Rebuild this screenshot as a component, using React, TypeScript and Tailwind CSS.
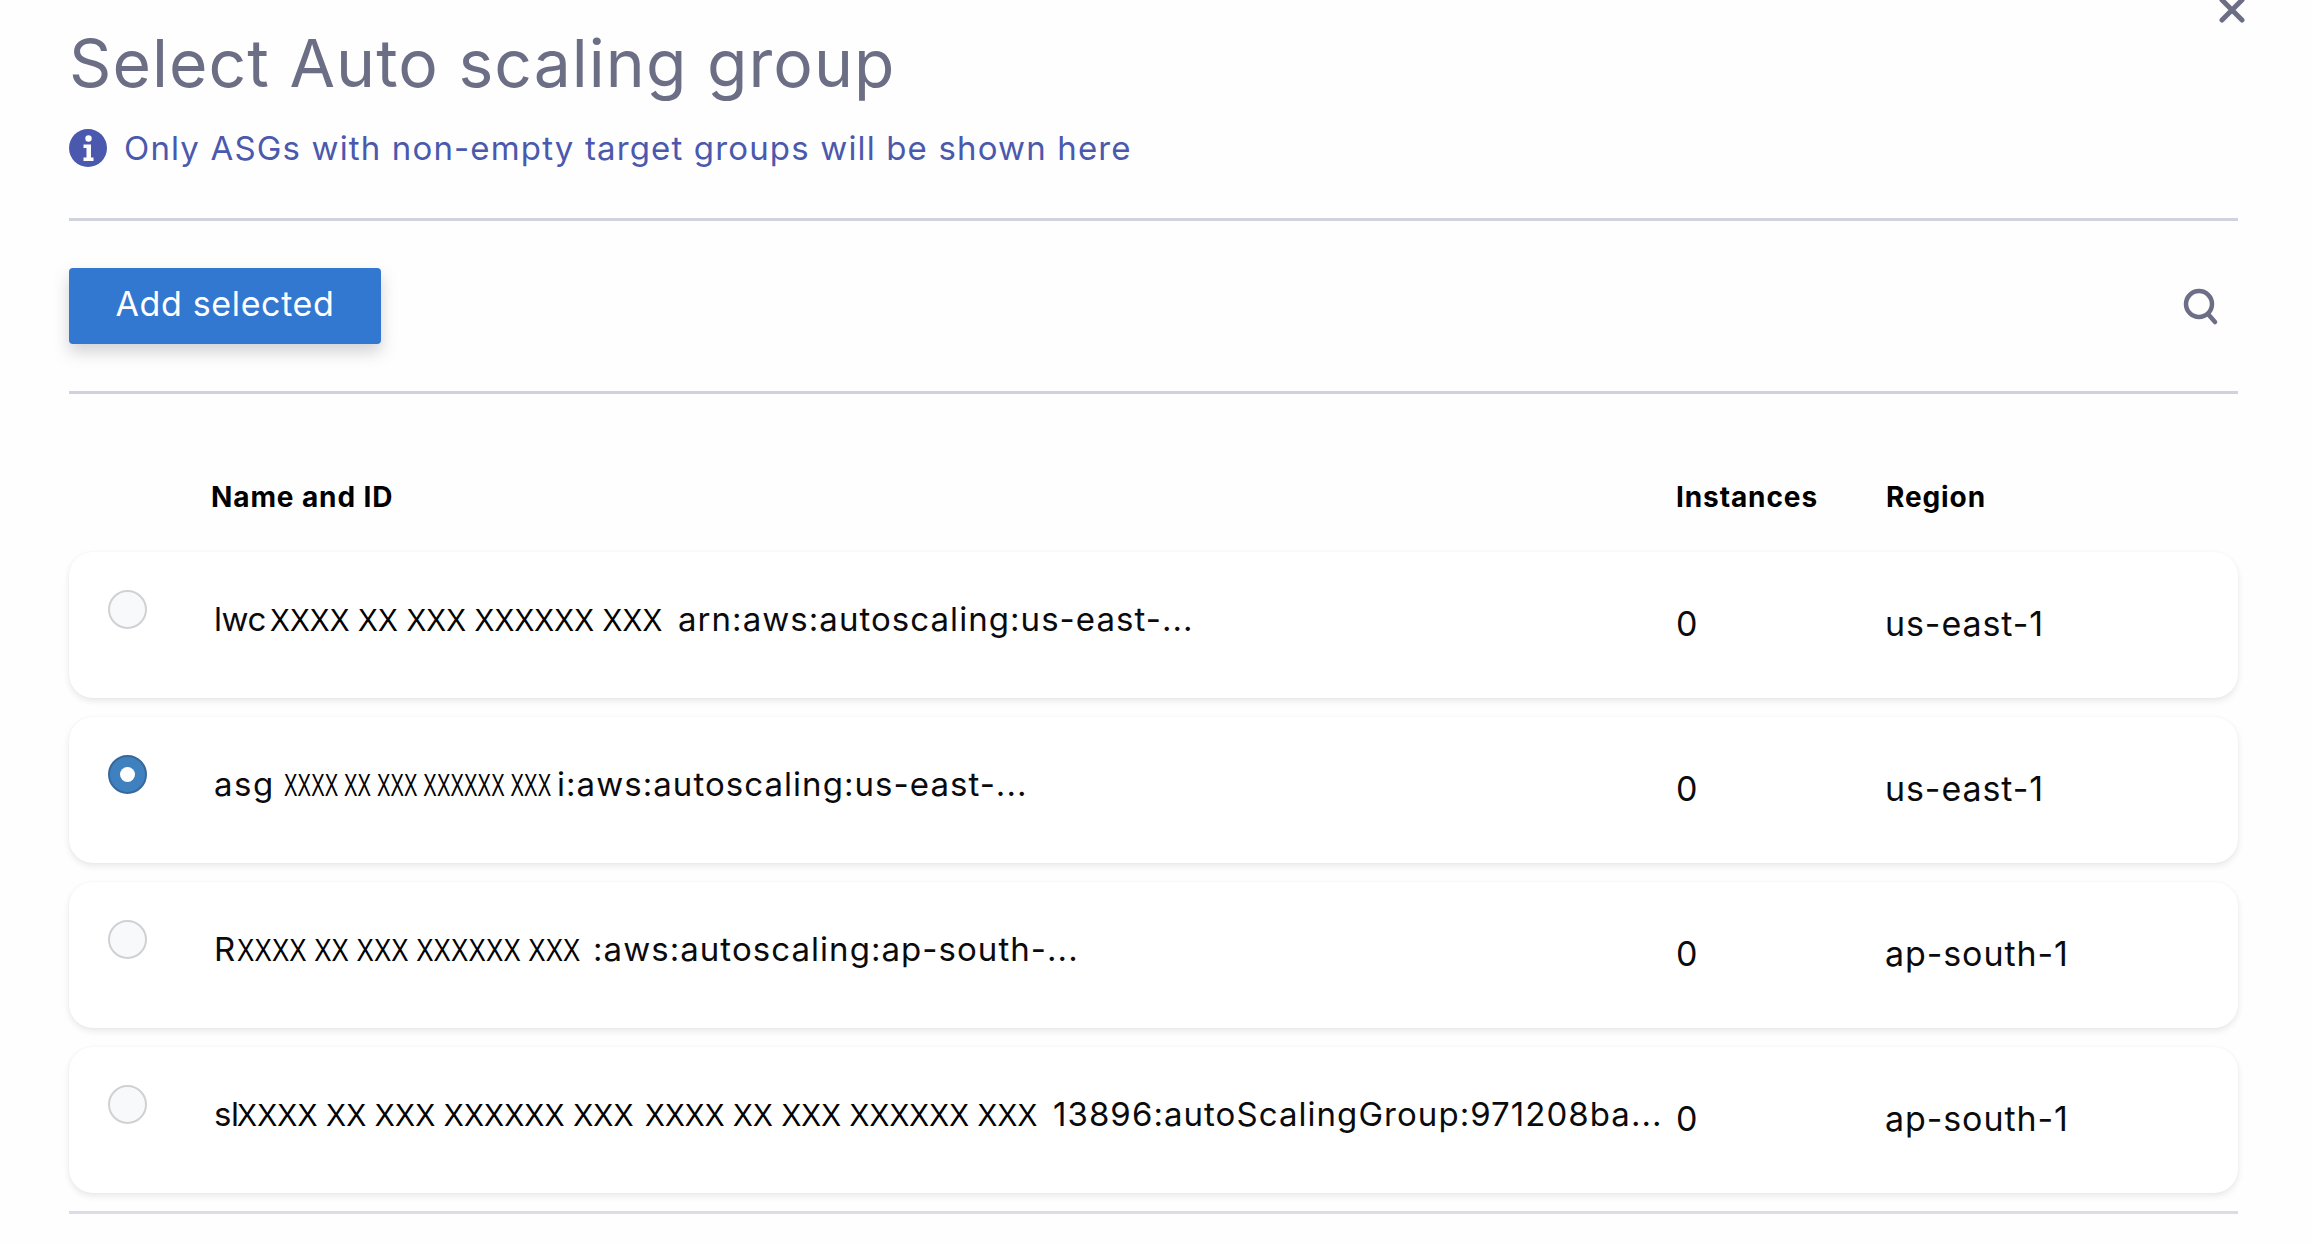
import React from "react";

const inter = "font-['Inter',sans-serif]";
const helv = "font-['Liberation_Sans',sans-serif]";

type Mask = { box: string; scale: string };

type RowData = {
  head: string;
  headCls: string;
  masks: Mask[];
  tail: string;
  tailCls: string;
  instances: string;
  region: string;
  selected?: boolean;
};

const rows: RowData[] = [
  {
    head: "lwc",
    headCls: "w-[56px] tracking-[-0.5px]",
    masks: [{ box: "w-[393px]", scale: "scale-x-[0.925]" }],
    tail: "arn:aws:autoscaling:us-east-...",
    tailCls: "ml-[15px]",
    instances: "0",
    region: "us-east-1",
  },
  {
    head: "asg",
    headCls: "w-[70px] tracking-[1.5px]",
    masks: [{ box: "w-[269px]", scale: "scale-x-[0.63]" }],
    tail: "i:aws:autoscaling:us-east-...",
    tailCls: "ml-[4px]",
    instances: "0",
    region: "us-east-1",
    selected: true,
  },
  {
    head: "R",
    headCls: "w-[23px]",
    masks: [{ box: "w-[345px]", scale: "scale-x-[0.81]" }],
    tail: ":aws:autoscaling:ap-south-...",
    tailCls: "ml-[11px]",
    instances: "0",
    region: "ap-south-1",
  },
  {
    head: "sl",
    headCls: "w-[23px] tracking-[-0.5px]",
    masks: [
      { box: "w-[395px]", scale: "scale-x-[0.935]" },
      { box: "ml-[13px] w-[390px]", scale: "scale-x-[0.925]" },
    ],
    tail: "13896:autoScalingGroup:971208ba...",
    tailCls: "ml-[18px]",
    instances: "0",
    region: "ap-south-1",
  },
];

function Radio({ selected }: { selected?: boolean }) {
  if (selected) {
    return (
      <span className="flex h-[39px] w-[39px] items-center justify-center rounded-full border-2 border-[#35699e] bg-[#3f80bf]">
        <span className="h-[15px] w-[15px] rounded-full bg-white" />
      </span>
    );
  }
  return <span className="block h-[39px] w-[39px] rounded-full border-2 border-[#cfd1d4] bg-[#f8f9fb]" />;
}

function Row({ row }: { row: RowData }) {
  return (
    <div className="flex h-[146px] rounded-[24px] bg-white shadow-[0_3px_6px_rgba(40,41,61,0.10),0_0_2px_rgba(40,41,61,0.04)]">
      <div className="w-[145px] pl-[39px] pt-[38px]">
        <Radio selected={row.selected} />
      </div>
      <div className="flex w-[1462px] items-baseline whitespace-nowrap pt-[44px] text-[33px] leading-[46px] tracking-[1.05px] text-[#0b0b0d]">
        <span className={`${inter} shrink-0 ${row.headCls}`}>{row.head}</span>
        {row.masks.map((m, i) => (
          <span key={i} className={`shrink-0 ${m.box}`}>
            <span
              className={`${helv} inline-block origin-left whitespace-nowrap text-[32px] tracking-[0.2px] text-black ${m.scale}`}
            >
              XXXX XX XXX XXXXXX XXX
            </span>
          </span>
        ))}
        <span className={`${inter} ${row.tailCls}`}>{row.tail}</span>
      </div>
      <div className={`${inter} w-[209px] pt-[49px] text-[34px] leading-[46px] text-[#0b0b0d]`}>{row.instances}</div>
      <div className={`${inter} pt-[49px] text-[34px] leading-[46px] tracking-[0.9px] text-[#0b0b0d]`}>{row.region}</div>
    </div>
  );
}

export default function App() {
  return (
    <div className={`${inter} relative h-[1244px] w-[2312px] overflow-hidden bg-[#fefefe] pl-[69px] pr-[74px]`}>
      <svg
        className="absolute left-[2216px] top-[-6px] h-[32px] w-[32px]"
        viewBox="0 0 32 32"
        fill="none"
        stroke="#6b6e85"
        strokeWidth="5"
        strokeLinecap="round"
      >
        <path d="M6 6 L26 26 M26 6 L6 26" />
      </svg>

      <h1 className="pt-[25px] text-[66px] font-normal leading-[76px] tracking-[1.05px] text-[#6b6e85]">
        Select Auto scaling group
      </h1>

      <div className="mt-[24px] flex items-center gap-[17px]">
        <svg className="h-[38px] w-[38px]" viewBox="0 0 38 38">
          <circle cx="19" cy="19" r="19" fill="#4a59ad" />
          <circle cx="19.5" cy="9.5" r="3.2" fill="#fff" />
          <path d="M14.500 15.500h7.500v13h2.500v3.500h-10v-3.500h3v-9.500h-3z" fill="#fff" />
        </svg>
        <span className="text-[33px] leading-[46px] tracking-[1.15px] text-[#4a59ad]">
          Only ASGs with non-empty target groups will be shown here
        </span>
      </div>

      <div className="mt-[47px] h-[3px] bg-[#d0d3de]" />

      <div className="flex h-[170px] items-center justify-between pr-[18px]">
        <button className="h-[76px] w-[312px] rounded-[4px] bg-[#3277d0] pb-[6px] text-[34px] tracking-[0.65px] text-white shadow-[0_8px_16px_rgba(96,97,112,0.28)]">
          Add selected
        </button>
        <svg
          className="mt-[2px] h-[38px] w-[38px]"
          viewBox="0 0 38 38"
          fill="none"
          stroke="#6b6e85"
          strokeWidth="4.500"
          strokeLinecap="round"
        >
          <circle cx="17" cy="16" r="13" />
          <path d="M26 26 L33 34" />
        </svg>
      </div>

      <div className="h-[3px] bg-[#d0d3de]" />

      <div className="flex h-[158px] items-end pb-[37px] text-[28px] font-bold leading-[36px] tracking-[0.9px] text-black">
        <div className="w-[142px]" />
        <div className="w-[1465px]">Name and ID</div>
        <div className="w-[210px]">Instances</div>
        <div>Region</div>
      </div>

      <div className="flex flex-col gap-[19px]">
        {rows.map((r) => (
          <Row key={r.head} row={r} />
        ))}
      </div>

      <div className="mt-[18px] h-[3px] bg-[#dcdce8]" />
    </div>
  );
}
